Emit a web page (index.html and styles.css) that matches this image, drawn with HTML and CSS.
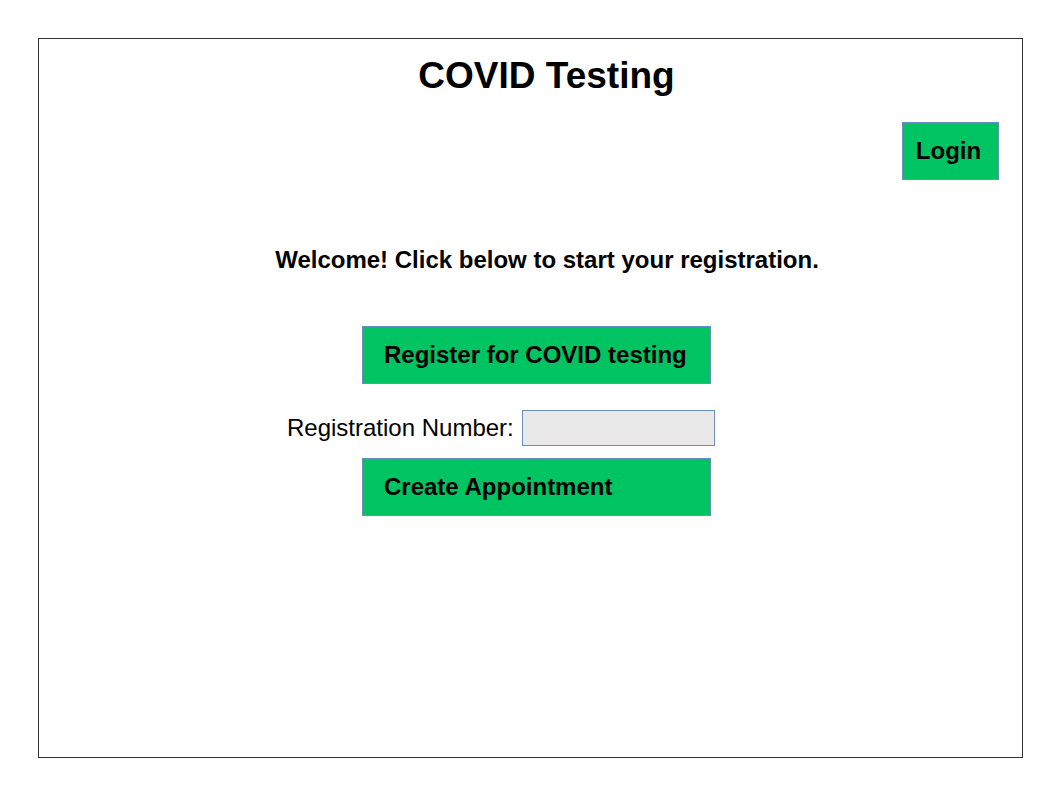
FILE: index.html
```html
<!DOCTYPE html>
<html lang="en">
<head>
<meta charset="utf-8">
<title>COVID Testing</title>
<link rel="stylesheet" href="styles.css">
</head>
<body>
<div class="frame">
  <h1 class="title">COVID Testing</h1>
  <div class="login-row">
    <button class="btn btn-login" type="button">Login</button>
  </div>
  <p class="welcome">Welcome! Click below to start your registration.</p>
  <div class="form">
    <button class="btn btn-wide btn-register" type="button">Register for COVID testing</button>
    <div class="reg-row">
      <label class="reg-label" for="regnum">Registration Number:</label>
      <input class="reg-input" id="regnum" type="text">
    </div>
    <button class="btn btn-wide btn-create" type="button">Create Appointment</button>
  </div>
</div>
</body>
</html>
```
FILE: styles.css
```css
html, body {
  margin: 0;
  padding: 0;
  background: #ffffff;
}

body {
  font-family: "Liberation Sans", Arial, sans-serif;
  color: #000000;
}

.frame {
  box-sizing: border-box;
  margin: 38px 0 0 38px;
  width: 985px;
  height: 720px;
  border: 1px solid #333333;
  padding-top: 14px;
  display: flex;
  flex-direction: column;
}

.title {
  margin: 0;
  padding-left: 32px;
  text-align: center;
  font-size: 37px;
  line-height: 45px;
  font-weight: bold;
}

.login-row {
  display: flex;
  justify-content: flex-end;
  margin-top: 24px;
  padding-right: 23px;
}

.btn {
  box-sizing: border-box;
  background: #00c462;
  border: 1px solid #6c8ebf;
  font-family: "Liberation Sans", Arial, sans-serif;
  font-weight: bold;
  font-size: 24px;
  color: #000000;
  height: 58px;
  padding: 0;
  margin: 0;
  cursor: pointer;
}

.btn-login {
  width: 97px;
  text-align: center;
  padding-right: 4px;
}

.welcome {
  margin: 66px 0 0 0;
  padding-left: 33px;
  text-align: center;
  font-size: 24px;
  line-height: 28px;
  font-weight: bold;
}

.form {
  display: flex;
  flex-direction: column;
  align-items: flex-start;
  margin-top: 52px;
}

.btn-wide {
  width: 349px;
  text-align: left;
  padding-left: 21px;
  margin-left: 323px;
}

.reg-row {
  display: flex;
  align-items: center;
  gap: 8px;
  margin: 26px 0 12px 248px;
}

.reg-label {
  font-size: 24px;
  line-height: 28px;
}

.reg-input {
  box-sizing: border-box;
  width: 193px;
  height: 36px;
  background: #e8e8e8;
  border: 1px solid #6c8ebf;
  margin: 0;
  padding: 0 6px;
  font-family: "Liberation Sans", Arial, sans-serif;
  font-size: 18px;
  outline: none;
}
```
